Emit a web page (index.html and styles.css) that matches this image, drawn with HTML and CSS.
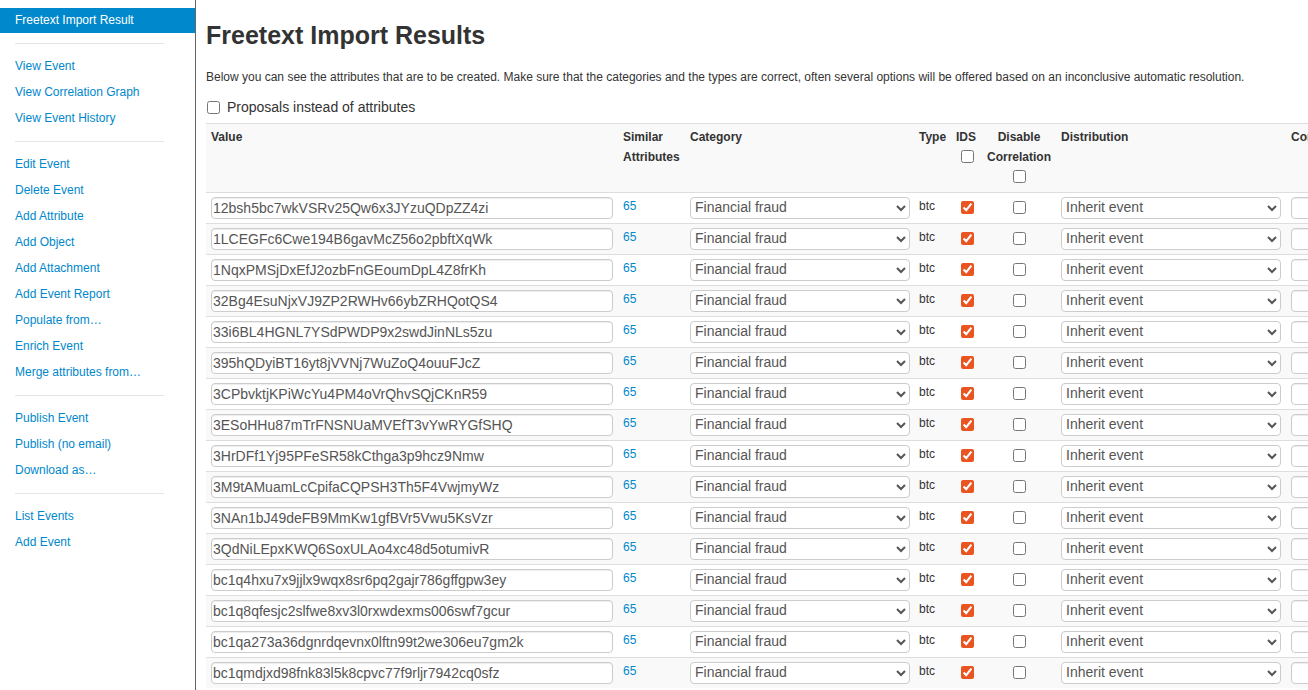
FILE: index.html
```html
<!DOCTYPE html>
<html lang="en">
<head>
<meta charset="utf-8">
<title>Freetext Import Results</title>
<link rel="stylesheet" href="styles.css">
</head>
<body>
<div class="layout">
  <aside class="sidebar">
    <ul class="side-nav">
      <li class="side-active">Freetext Import Result</li>
      <li class="side-divider"></li>
      <li><a href="#">View Event</a></li>
      <li><a href="#">View Correlation Graph</a></li>
      <li><a href="#">View Event History</a></li>
      <li class="side-divider"></li>
      <li><a href="#">Edit Event</a></li>
      <li><a href="#">Delete Event</a></li>
      <li><a href="#">Add Attribute</a></li>
      <li><a href="#">Add Object</a></li>
      <li><a href="#">Add Attachment</a></li>
      <li><a href="#">Add Event Report</a></li>
      <li><a href="#">Populate from…</a></li>
      <li><a href="#">Enrich Event</a></li>
      <li><a href="#">Merge attributes from…</a></li>
      <li class="side-divider"></li>
      <li><a href="#">Publish Event</a></li>
      <li><a href="#">Publish (no email)</a></li>
      <li><a href="#">Download as…</a></li>
      <li class="side-divider"></li>
      <li><a href="#">List Events</a></li>
      <li><a href="#">Add Event</a></li>
    </ul>
  </aside>
  <main class="content">
    <h2 class="title">Freetext Import Results</h2>
    <p class="intro">Below you can see the attributes that are to be created. Make sure that the categories and the types are correct, often several options will be offered based on an inconclusive automatic resolution.</p>
    <label class="proposal"><input type="checkbox" class="proposal-check"> Proposals instead of attributes</label>
    <table class="grid">
      <tbody>
        <tr>
          <th class="c-value">Value</th>
          <th class="c-similar">Similar<br>Attributes</th>
          <th class="c-category">Category</th>
          <th class="c-type">Type</th>
          <th class="c-ids">IDS<br><input type="checkbox" class="head-check"></th>
          <th class="c-corr">Disable<br>Correlation<br><input type="checkbox" class="head-check"></th>
          <th class="c-dist">Distribution</th>
          <th class="c-comment">Comment</th>
          <th class="c-tags">Tags</th>
          <th class="c-actions">Actions</th>
        </tr>
        <tr><td><input class="val" type="text" value="12bsh5bc7wkVSRv25Qw6x3JYzuQDpZZ4zi"></td><td><a href="#">65</a></td><td><select class="sel"><option>Financial fraud</option><option>Payload delivery</option><option>Network activity</option></select></td><td>btc</td><td><input type="checkbox" class="row-check" checked></td><td class="center"><input type="checkbox" class="row-check mid"></td><td><select class="sel"><option>Inherit event</option><option>Your organisation only</option><option>This community only</option></select></td><td><input class="cmt" type="text"></td><td></td><td></td></tr>
        <tr><td><input class="val" type="text" value="1LCEGFc6Cwe194B6gavMcZ56o2pbftXqWk"></td><td><a href="#">65</a></td><td><select class="sel"><option>Financial fraud</option><option>Payload delivery</option><option>Network activity</option></select></td><td>btc</td><td><input type="checkbox" class="row-check" checked></td><td class="center"><input type="checkbox" class="row-check mid"></td><td><select class="sel"><option>Inherit event</option><option>Your organisation only</option><option>This community only</option></select></td><td><input class="cmt" type="text"></td><td></td><td></td></tr>
        <tr><td><input class="val" type="text" value="1NqxPMSjDxEfJ2ozbFnGEoumDpL4Z8frKh"></td><td><a href="#">65</a></td><td><select class="sel"><option>Financial fraud</option><option>Payload delivery</option><option>Network activity</option></select></td><td>btc</td><td><input type="checkbox" class="row-check" checked></td><td class="center"><input type="checkbox" class="row-check mid"></td><td><select class="sel"><option>Inherit event</option><option>Your organisation only</option><option>This community only</option></select></td><td><input class="cmt" type="text"></td><td></td><td></td></tr>
        <tr><td><input class="val" type="text" value="32Bg4EsuNjxVJ9ZP2RWHv66ybZRHQotQS4"></td><td><a href="#">65</a></td><td><select class="sel"><option>Financial fraud</option><option>Payload delivery</option><option>Network activity</option></select></td><td>btc</td><td><input type="checkbox" class="row-check" checked></td><td class="center"><input type="checkbox" class="row-check mid"></td><td><select class="sel"><option>Inherit event</option><option>Your organisation only</option><option>This community only</option></select></td><td><input class="cmt" type="text"></td><td></td><td></td></tr>
        <tr><td><input class="val" type="text" value="33i6BL4HGNL7YSdPWDP9x2swdJinNLs5zu"></td><td><a href="#">65</a></td><td><select class="sel"><option>Financial fraud</option><option>Payload delivery</option><option>Network activity</option></select></td><td>btc</td><td><input type="checkbox" class="row-check" checked></td><td class="center"><input type="checkbox" class="row-check mid"></td><td><select class="sel"><option>Inherit event</option><option>Your organisation only</option><option>This community only</option></select></td><td><input class="cmt" type="text"></td><td></td><td></td></tr>
        <tr><td><input class="val" type="text" value="395hQDyiBT16yt8jVVNj7WuZoQ4ouuFJcZ"></td><td><a href="#">65</a></td><td><select class="sel"><option>Financial fraud</option><option>Payload delivery</option><option>Network activity</option></select></td><td>btc</td><td><input type="checkbox" class="row-check" checked></td><td class="center"><input type="checkbox" class="row-check mid"></td><td><select class="sel"><option>Inherit event</option><option>Your organisation only</option><option>This community only</option></select></td><td><input class="cmt" type="text"></td><td></td><td></td></tr>
        <tr><td><input class="val" type="text" value="3CPbvktjKPiWcYu4PM4oVrQhvSQjCKnR59"></td><td><a href="#">65</a></td><td><select class="sel"><option>Financial fraud</option><option>Payload delivery</option><option>Network activity</option></select></td><td>btc</td><td><input type="checkbox" class="row-check" checked></td><td class="center"><input type="checkbox" class="row-check mid"></td><td><select class="sel"><option>Inherit event</option><option>Your organisation only</option><option>This community only</option></select></td><td><input class="cmt" type="text"></td><td></td><td></td></tr>
        <tr><td><input class="val" type="text" value="3ESoHHu87mTrFNSNUaMVEfT3vYwRYGfSHQ"></td><td><a href="#">65</a></td><td><select class="sel"><option>Financial fraud</option><option>Payload delivery</option><option>Network activity</option></select></td><td>btc</td><td><input type="checkbox" class="row-check" checked></td><td class="center"><input type="checkbox" class="row-check mid"></td><td><select class="sel"><option>Inherit event</option><option>Your organisation only</option><option>This community only</option></select></td><td><input class="cmt" type="text"></td><td></td><td></td></tr>
        <tr><td><input class="val" type="text" value="3HrDFf1Yj95PFeSR58kCthga3p9hcz9Nmw"></td><td><a href="#">65</a></td><td><select class="sel"><option>Financial fraud</option><option>Payload delivery</option><option>Network activity</option></select></td><td>btc</td><td><input type="checkbox" class="row-check" checked></td><td class="center"><input type="checkbox" class="row-check mid"></td><td><select class="sel"><option>Inherit event</option><option>Your organisation only</option><option>This community only</option></select></td><td><input class="cmt" type="text"></td><td></td><td></td></tr>
        <tr><td><input class="val" type="text" value="3M9tAMuamLcCpifaCQPSH3Th5F4VwjmyWz"></td><td><a href="#">65</a></td><td><select class="sel"><option>Financial fraud</option><option>Payload delivery</option><option>Network activity</option></select></td><td>btc</td><td><input type="checkbox" class="row-check" checked></td><td class="center"><input type="checkbox" class="row-check mid"></td><td><select class="sel"><option>Inherit event</option><option>Your organisation only</option><option>This community only</option></select></td><td><input class="cmt" type="text"></td><td></td><td></td></tr>
        <tr><td><input class="val" type="text" value="3NAn1bJ49deFB9MmKw1gfBVr5Vwu5KsVzr"></td><td><a href="#">65</a></td><td><select class="sel"><option>Financial fraud</option><option>Payload delivery</option><option>Network activity</option></select></td><td>btc</td><td><input type="checkbox" class="row-check" checked></td><td class="center"><input type="checkbox" class="row-check mid"></td><td><select class="sel"><option>Inherit event</option><option>Your organisation only</option><option>This community only</option></select></td><td><input class="cmt" type="text"></td><td></td><td></td></tr>
        <tr><td><input class="val" type="text" value="3QdNiLEpxKWQ6SoxULAo4xc48d5otumivR"></td><td><a href="#">65</a></td><td><select class="sel"><option>Financial fraud</option><option>Payload delivery</option><option>Network activity</option></select></td><td>btc</td><td><input type="checkbox" class="row-check" checked></td><td class="center"><input type="checkbox" class="row-check mid"></td><td><select class="sel"><option>Inherit event</option><option>Your organisation only</option><option>This community only</option></select></td><td><input class="cmt" type="text"></td><td></td><td></td></tr>
        <tr><td><input class="val" type="text" value="bc1q4hxu7x9jjlx9wqx8sr6pq2gajr786gffgpw3ey"></td><td><a href="#">65</a></td><td><select class="sel"><option>Financial fraud</option><option>Payload delivery</option><option>Network activity</option></select></td><td>btc</td><td><input type="checkbox" class="row-check" checked></td><td class="center"><input type="checkbox" class="row-check mid"></td><td><select class="sel"><option>Inherit event</option><option>Your organisation only</option><option>This community only</option></select></td><td><input class="cmt" type="text"></td><td></td><td></td></tr>
        <tr><td><input class="val" type="text" value="bc1q8qfesjc2slfwe8xv3l0rxwdexms006swf7gcur"></td><td><a href="#">65</a></td><td><select class="sel"><option>Financial fraud</option><option>Payload delivery</option><option>Network activity</option></select></td><td>btc</td><td><input type="checkbox" class="row-check" checked></td><td class="center"><input type="checkbox" class="row-check mid"></td><td><select class="sel"><option>Inherit event</option><option>Your organisation only</option><option>This community only</option></select></td><td><input class="cmt" type="text"></td><td></td><td></td></tr>
        <tr><td><input class="val" type="text" value="bc1qa273a36dgnrdqevnx0lftn99t2we306eu7gm2k"></td><td><a href="#">65</a></td><td><select class="sel"><option>Financial fraud</option><option>Payload delivery</option><option>Network activity</option></select></td><td>btc</td><td><input type="checkbox" class="row-check" checked></td><td class="center"><input type="checkbox" class="row-check mid"></td><td><select class="sel"><option>Inherit event</option><option>Your organisation only</option><option>This community only</option></select></td><td><input class="cmt" type="text"></td><td></td><td></td></tr>
        <tr><td><input class="val" type="text" value="bc1qmdjxd98fnk83l5k8cpvc77f9rljr7942cq0sfz"></td><td><a href="#">65</a></td><td><select class="sel"><option>Financial fraud</option><option>Payload delivery</option><option>Network activity</option></select></td><td>btc</td><td><input type="checkbox" class="row-check" checked></td><td class="center"><input type="checkbox" class="row-check mid"></td><td><select class="sel"><option>Inherit event</option><option>Your organisation only</option><option>This community only</option></select></td><td><input class="cmt" type="text"></td><td></td><td></td></tr>
      </tbody>
    </table>
  </main>
</div>
</body>
</html>
```

FILE: styles.css
```css
html, body {
  margin: 0;
  padding: 0;
  overflow: hidden;
  background: #fff;
}

body {
  font-family: "Liberation Sans", Arial, Helvetica, sans-serif;
  font-size: 12px;
  line-height: 20px;
  color: #333;
}

.layout {
  display: flex;
  align-items: stretch;
  min-height: 100vh;
}

.sidebar {
  flex: 0 0 195px;
  width: 195px;
  border-right: 1px solid #666;
  background: #fff;
}

.side-nav {
  list-style: none;
  margin: 0;
  padding: 8px 0 0 0;
}

.side-nav li {
  height: 26px;
  line-height: 26px;
  padding: 0 15px;
  white-space: nowrap;
}

.side-nav a {
  color: #0088cc;
  text-decoration: none;
}

.side-nav .side-active {
  height: 25px;
  line-height: 25px;
  background: #0088cc;
  color: #fff;
}

.side-nav .side-divider {
  height: 1px;
  line-height: 1px;
  padding: 0;
  margin: 10px 31px 9px 15px;
  background: #e5e5e5;
}

.content {
  flex: 1 1 auto;
  min-width: 0;
  padding: 6px 0 0 10px;
}

.title {
  margin: 9px 0 12px 0;
  font-size: 25px;
  line-height: 40px;
  font-weight: bold;
  color: #333;
}

.intro {
  margin: 0 0 10px 0;
  white-space: nowrap;
}

.proposal {
  display: block;
  font-size: 14px;
  line-height: 20px;
  white-space: nowrap;
}

.proposal-check {
  margin: 0 3px 0 1px;
  width: 13px;
  height: 13px;
  vertical-align: -2px;
}

.grid {
  margin-top: 6px;
  border-collapse: collapse;
  table-layout: fixed;
  width: 1540px;
}

.grid th,
.grid td {
  padding: 4px 5px;
  border-top: 1px solid #ddd;
  text-align: left;
  vertical-align: top;
  line-height: 20px;
}

.grid td {
  line-height: 18px;
}

.grid th {
  font-weight: bold;
  font-size: 12px;
  padding-top: 3px;
  padding-bottom: 5px;
}

.grid tr:nth-child(odd) > th,
.grid tr:nth-child(odd) > td {
  background: #f9f9f9;
}

.grid .c-value { width: 402px; }
.grid .c-similar { width: 57px; }
.grid .c-category { width: 219px; }
.grid .c-type { width: 27px; }
.grid .c-ids { width: 21px; }
.grid .c-corr { width: 64px; text-align: center; }
.grid .c-dist { width: 220px; }
.grid .c-comment { width: 220px; }
.grid .c-tags { width: 140px; }
.grid .c-actions { width: 70px; }

.grid td.center { text-align: center; }

.grid a {
  color: #0088cc;
  text-decoration: none;
}

.head-check {
  margin: 3px 0 0 5px;
  width: 13px;
  height: 13px;
  vertical-align: top;
}

.c-corr .head-check {
  margin: 3px 0 0 0;
}

input[type="checkbox"] {
  accent-color: #e95420;
}

.row-check {
  display: block;
  margin: 4px 0 0 5px;
  width: 13px;
  height: 13px;
}

.row-check.mid {
  margin: 4px auto 0 auto;
}

.val,
.cmt {
  display: block;
  box-sizing: border-box;
  height: 22px;
  margin: 0;
  padding: 0 1px 1px 1px;
  border: 1px solid #ccc;
  border-radius: 4px;
  box-shadow: inset 0 1px 1px rgba(0, 0, 0, 0.075);
  background: #fff;
  font-family: "Liberation Sans", Arial, Helvetica, sans-serif;
  font-size: 14px;
  color: #555;
}

.val { width: 402px; }
.cmt { width: 220px; }

.sel {
  display: block;
  box-sizing: border-box;
  width: 220px;
  height: 22px;
  margin: 0;
  padding: 0 0 2px 0;
  border: 1px solid #ccc;
  border-radius: 4px;
  background: #fff;
  font-family: "Liberation Sans", Arial, Helvetica, sans-serif;
  font-size: 14px;
  color: #555;
}
```
